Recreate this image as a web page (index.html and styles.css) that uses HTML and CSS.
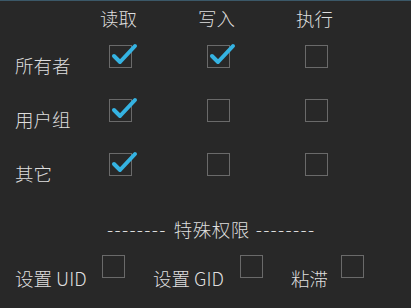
FILE: index.html
```html
<!DOCTYPE html>
<html>
<head>
<meta charset="utf-8">
<link rel="stylesheet" href="styles.css">
</head>
<body>
<div class="perm">
  <div class="grid">
    <div></div>
    <div class="hd">读取</div>
    <div class="hd">写入</div>
    <div class="hd">执行</div>

    <div class="lbl">所有者</div>
    <div class="cell"><span class="cb on"><svg class="tick" viewBox="0 0 32 22"><path d="M5 11 L11 17 L26 1"/></svg></span></div>
    <div class="cell"><span class="cb on"><svg class="tick" viewBox="0 0 32 22"><path d="M5 11 L11 17 L26 1"/></svg></span></div>
    <div class="cell"><span class="cb"></span></div>

    <div class="lbl">用户组</div>
    <div class="cell"><span class="cb on"><svg class="tick" viewBox="0 0 32 22"><path d="M5 11 L11 17 L26 1"/></svg></span></div>
    <div class="cell"><span class="cb"></span></div>
    <div class="cell"><span class="cb"></span></div>

    <div class="lbl">其它</div>
    <div class="cell"><span class="cb on"><svg class="tick" viewBox="0 0 32 22"><path d="M5 11 L11 17 L26 1"/></svg></span></div>
    <div class="cell"><span class="cb"></span></div>
    <div class="cell"><span class="cb"></span></div>
  </div>

  <div class="special"><span class="dash">--------</span><span class="title">特殊权限</span><span class="dash">--------</span></div>

  <div class="bottom">
    <span class="txt w1">设置 UID</span>
    <span class="cb"></span>
    <span class="txt w2">设置 GID</span>
    <span class="cb"></span>
    <span class="txt w3">粘滞</span>
    <span class="cb"></span>
  </div>
</div>
</body>
</html>
```

FILE: styles.css
```css
html, body {
  margin: 0;
  padding: 0;
  background: #282828;
}
body {
  width: 411px;
  height: 308px;
  overflow: hidden;
  font-family: "Noto Sans CJK SC", "Noto Sans", sans-serif;
  font-size: 18.5px;
  font-weight: 300;
  color: #dedede;
}
.perm {
  border-top: 1px solid #3b5868;
  height: 307px;
}
.grid {
  display: grid;
  grid-template-columns: 56px 98px 98px 98px;
  grid-template-rows: 39px 54px 54px 55px;
  padding-left: 15px;
}
.hd {
  text-align: center;
  line-height: 26px;
  padding-top: 4px;
  margin-left: -3px;
}
.lbl {
  white-space: nowrap;
  line-height: 24px;
  padding-top: 13px;
}
.cell {
  display: flex;
  justify-content: center;
  align-items: flex-start;
  padding-top: 5px;
  padding-left: 1px;
}
.cb {
  position: relative;
  display: block;
  width: 23px;
  height: 23px;
  box-sizing: border-box;
  border: 1.5px solid #6a6a6a;
  flex: none;
}
.tick {
  position: absolute;
  left: -1.5px;
  top: -1.5px;
  width: 32px;
  height: 22px;
  overflow: visible;
}
.tick path {
  fill: none;
  stroke: #35b3e2;
  stroke-width: 4;
  stroke-linecap: round;
  stroke-linejoin: round;
}
.special {
  display: flex;
  align-items: center;
  padding-left: 107px;
  margin-top: 14px;
  line-height: 24px;
  white-space: nowrap;
}
.dash {
  letter-spacing: 1.3px;
}
.title {
  margin-left: 7px;
  margin-right: 6px;
  letter-spacing: 0.5px;
}
.bottom {
  display: flex;
  align-items: flex-start;
  padding-left: 15px;
  margin-top: 14px;
}
.txt {
  line-height: 24px;
  margin-top: 11px;
  white-space: nowrap;
  flex: none;
}
.w1 { width: 87px; }
.w2 { width: 87px; margin-left: 28px; }
.w3 { width: 50px; margin-left: 28px; }
```
